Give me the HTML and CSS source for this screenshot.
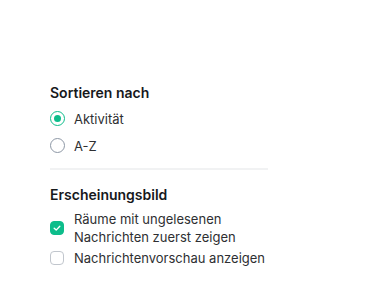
FILE: index.html
```html
<!DOCTYPE html>
<html>
<head>
<meta charset="utf-8">
<link rel="stylesheet" href="styles.css">
</head>
<body>
<div class="menu">
  <section class="group">
    <h3 class="title">Sortieren nach</h3>
    <label class="option radio-row">
      <span class="radio checked"></span>
      <span class="label">Aktivität</span>
    </label>
    <label class="option radio-row">
      <span class="radio"></span>
      <span class="label">A-Z</span>
    </label>
  </section>
  <hr class="sep">
  <section class="group">
    <h3 class="title">Erscheinungsbild</h3>
    <label class="option check-row">
      <span class="check checked">
        <svg width="10" height="10" viewBox="0 0 10 10"><path d="M2.2 5.2 L4.2 7.1 L7.8 3.2" fill="none" stroke="#fff" stroke-width="1.4" stroke-linecap="round" stroke-linejoin="round"/></svg>
      </span>
      <span class="label">Räume mit ungelesenen<br>Nachrichten zuerst zeigen</span>
    </label>
    <label class="option check-row">
      <span class="check"></span>
      <span class="label">Nachrichtenvorschau anzeigen</span>
    </label>
  </section>
</div>
</body>
</html>
```
FILE: styles.css
```css
html, body {
  margin: 0;
  padding: 0;
  background: #ffffff;
}
body {
  font-family: Inter, "Noto Sans", sans-serif;
  color: #17191c;
}
.menu {
  width: 218px;
  padding: 83px 0 0 50px;
}
.group {
  display: flex;
  flex-direction: column;
}
.title {
  margin: 0 0 2px 0;
  font-size: 14px;
  font-weight: 600;
  line-height: 20px;
  color: #17191c;
}
.option {
  display: flex;
  align-items: center;
}
.radio-row {
  min-height: 27px;
  gap: 9px;
}
.check-row {
  padding-top: 3px;
  gap: 10px;
}
.label {
  font-size: 13px;
  line-height: 18px;
  color: #2e2f32;
  white-space: nowrap;
}
.radio {
  box-sizing: border-box;
  width: 15px;
  height: 15px;
  border-radius: 50%;
  border: 1.5px solid #8d97a5;
  display: flex;
  align-items: center;
  justify-content: center;
  flex: none;
}
.radio.checked {
  border-color: #0dbd8b;
}
.radio.checked::after {
  content: "";
  width: 7px;
  height: 7px;
  border-radius: 50%;
  background: #0dbd8b;
}
.sep {
  border: none;
  height: 2px;
  background: #f1f2f3;
  margin: 9px 0 15px 0;
}
.check {
  box-sizing: border-box;
  width: 14px;
  height: 14px;
  border-radius: 4px;
  border: 1px solid #c1c6cd;
  display: flex;
  align-items: center;
  justify-content: center;
  flex: none;
}
.check.checked {
  background: #0dbd8b;
  border-color: #0dbd8b;
}
```
